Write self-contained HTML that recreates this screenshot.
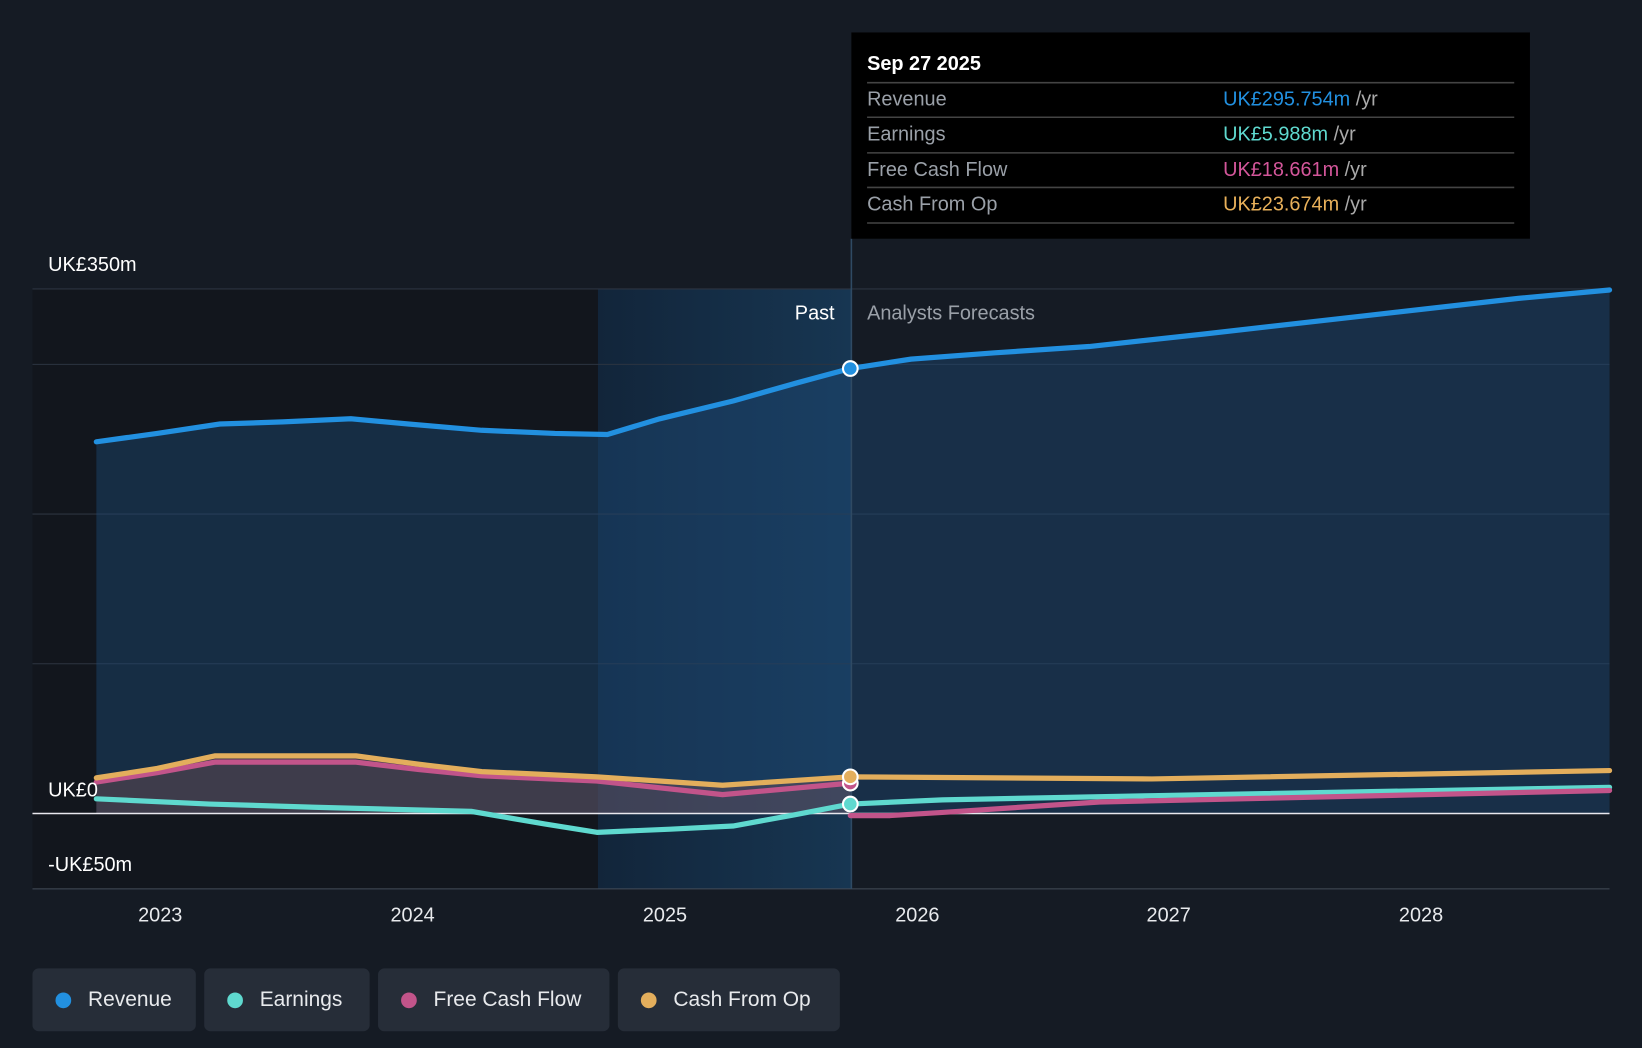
<!DOCTYPE html>
<html><head><meta charset="utf-8"><style>
html,body{margin:0;padding:0;background:#151b24;width:1642px;height:1048px;overflow:hidden}
#w{width:1568px;height:1001px;transform:scale(1.04719,1.04695);transform-origin:0 0;position:relative;font-family:"Liberation Sans",sans-serif}
.lg{position:absolute;top:925px;height:60px;background:#262d38;border-radius:6px;color:#e8eaed;font-size:20px;line-height:60px;box-sizing:border-box;padding-left:53px}
.lg i{position:absolute;left:22px;top:23px;width:15px;height:15px;border-radius:50%}
</style></head><body><div id="w">
<svg width="1568" height="1001" viewBox="0 0 1568 1001" style="position:absolute;left:0;top:0" font-family="Liberation Sans, sans-serif">
<defs>
<linearGradient id="pg" x1="0" x2="1"><stop offset="0" stop-color="#12253a"/><stop offset="1" stop-color="#173652"/></linearGradient>
</defs>
<rect x="31" y="276" width="540" height="573" fill="#12161d"/>
<rect x="571" y="276" width="242" height="573" fill="url(#pg)"/>
<g stroke="#2c3440" stroke-width="1"><line x1="31" y1="276" x2="1537" y2="276"/><line x1="31" y1="348" x2="1537" y2="348"/><line x1="31" y1="491" x2="1537" y2="491"/><line x1="31" y1="634" x2="1537" y2="634"/><line x1="31" y1="849" x2="1537" y2="849" stroke="#444c58"/></g>
<path d="M92,422 L150,414 L210,405 L270,403 L335,400 L390,405 L460,411 L530,414 L580,415 L630,400 L700,383 L760,366 L812,352 L870,343 L950,337 L1040,331 L1150,319 L1300,302 L1450,285 L1537,277 L1537,777 L92,777Z" fill="#1d4a75" fill-opacity="0.45"/>
<path d="M92,743 L150,734 L205,722 L340,722 L400,730 L460,737 L570,742 L690,750 L812,742 L812,777 L92,777Z" fill="#8a5a5a" fill-opacity="0.35"/>
<line x1="31" y1="777" x2="1537" y2="777" stroke="#e8e8ee" stroke-width="1.5"/>
<line x1="813" y1="228" x2="813" y2="849" stroke="#2f4a63" stroke-width="1.5"/>
<g fill="none" stroke-width="5" stroke-linecap="round" stroke-linejoin="round">
<path d="M92,763 L200,768 L300,771 L450,775 L520,787 L570,795 L640,792 L700,789 L760,778 L812,768 L900,764 L1100,760 L1537,752" stroke="#5fd9cf"/>
<path d="M92,747 L150,738 L205,728 L340,728 L400,735 L460,741 L570,746 L690,759 L812,748" stroke="#c2548a"/>
<path d="M812,779 L850,779 L900,776 L1050,766 L1537,755" stroke="#c2548a"/>
<path d="M92,743 L150,734 L205,722 L340,722 L400,730 L460,737 L570,742 L690,750 L812,742 L1100,744 L1537,736" stroke="#e3ae5c"/>
<path d="M92,422 L150,414 L210,405 L270,403 L335,400 L390,405 L460,411 L530,414 L580,415 L630,400 L700,383 L760,366 L812,352 L870,343 L950,337 L1040,331 L1150,319 L1300,302 L1450,285 L1537,277" stroke="#2290e0"/>
</g>
<g stroke="#fff" stroke-width="2"><circle cx="812" cy="352" r="7" fill="#2290e0"/><circle cx="812" cy="748" r="7" fill="#c2548a"/><circle cx="812" cy="742" r="7" fill="#e3ae5c"/><circle cx="812" cy="768" r="7" fill="#5fd9cf"/></g>
<g font-size="19" fill="#fff"><text x="46" y="259">UK£350m</text><text x="46" y="761">UK£0</text><text x="46" y="832">-UK£50m</text></g>
<text x="797" y="305" font-size="19" fill="#fff" text-anchor="end">Past</text>
<text x="828" y="305" font-size="19" fill="#9aa0a8">Analysts Forecasts</text>
<g font-size="19" fill="#e8eaed" text-anchor="middle"><text x="153" y="880">2023</text><text x="394" y="880">2024</text><text x="635" y="880">2025</text><text x="876" y="880">2026</text><text x="1116" y="880">2027</text><text x="1357" y="880">2028</text></g>
<rect x="813" y="31" width="648" height="197" fill="#000"/>
<text x="828" y="67" font-size="19" fill="#fff" font-weight="bold">Sep 27 2025</text>
<g stroke="#444" stroke-width="1.5"><line x1="828" y1="79" x2="1446" y2="79"/><line x1="828" y1="112" x2="1446" y2="112"/><line x1="828" y1="146" x2="1446" y2="146"/><line x1="828" y1="179" x2="1446" y2="179"/><line x1="828" y1="213" x2="1446" y2="213"/></g>
<g font-size="19" fill="#9aa0a8"><text x="828" y="101">Revenue</text><text x="828" y="134">Earnings</text><text x="828" y="168">Free Cash Flow</text><text x="828" y="201">Cash From Op</text></g>
<g font-size="19"><text x="1168" y="101"><tspan fill="#2290e0">UK£295.754m</tspan><tspan fill="#aaa"> /yr</tspan></text>
<text x="1168" y="134"><tspan fill="#5fd9cf">UK£5.988m</tspan><tspan fill="#aaa"> /yr</tspan></text>
<text x="1168" y="168"><tspan fill="#d3569a">UK£18.661m</tspan><tspan fill="#aaa"> /yr</tspan></text>
<text x="1168" y="201"><tspan fill="#e8b05a">UK£23.674m</tspan><tspan fill="#aaa"> /yr</tspan></text></g>
</svg>
<div class="lg" style="left:31px;width:156px"><i style="background:#2290e0"></i>Revenue</div>
<div class="lg" style="left:195px;width:158px"><i style="background:#5fd9cf"></i>Earnings</div>
<div class="lg" style="left:361px;width:221px"><i style="background:#c2548a"></i>Free Cash Flow</div>
<div class="lg" style="left:590px;width:212px"><i style="background:#e3ae5c"></i>Cash From Op</div>
</div></body></html>
